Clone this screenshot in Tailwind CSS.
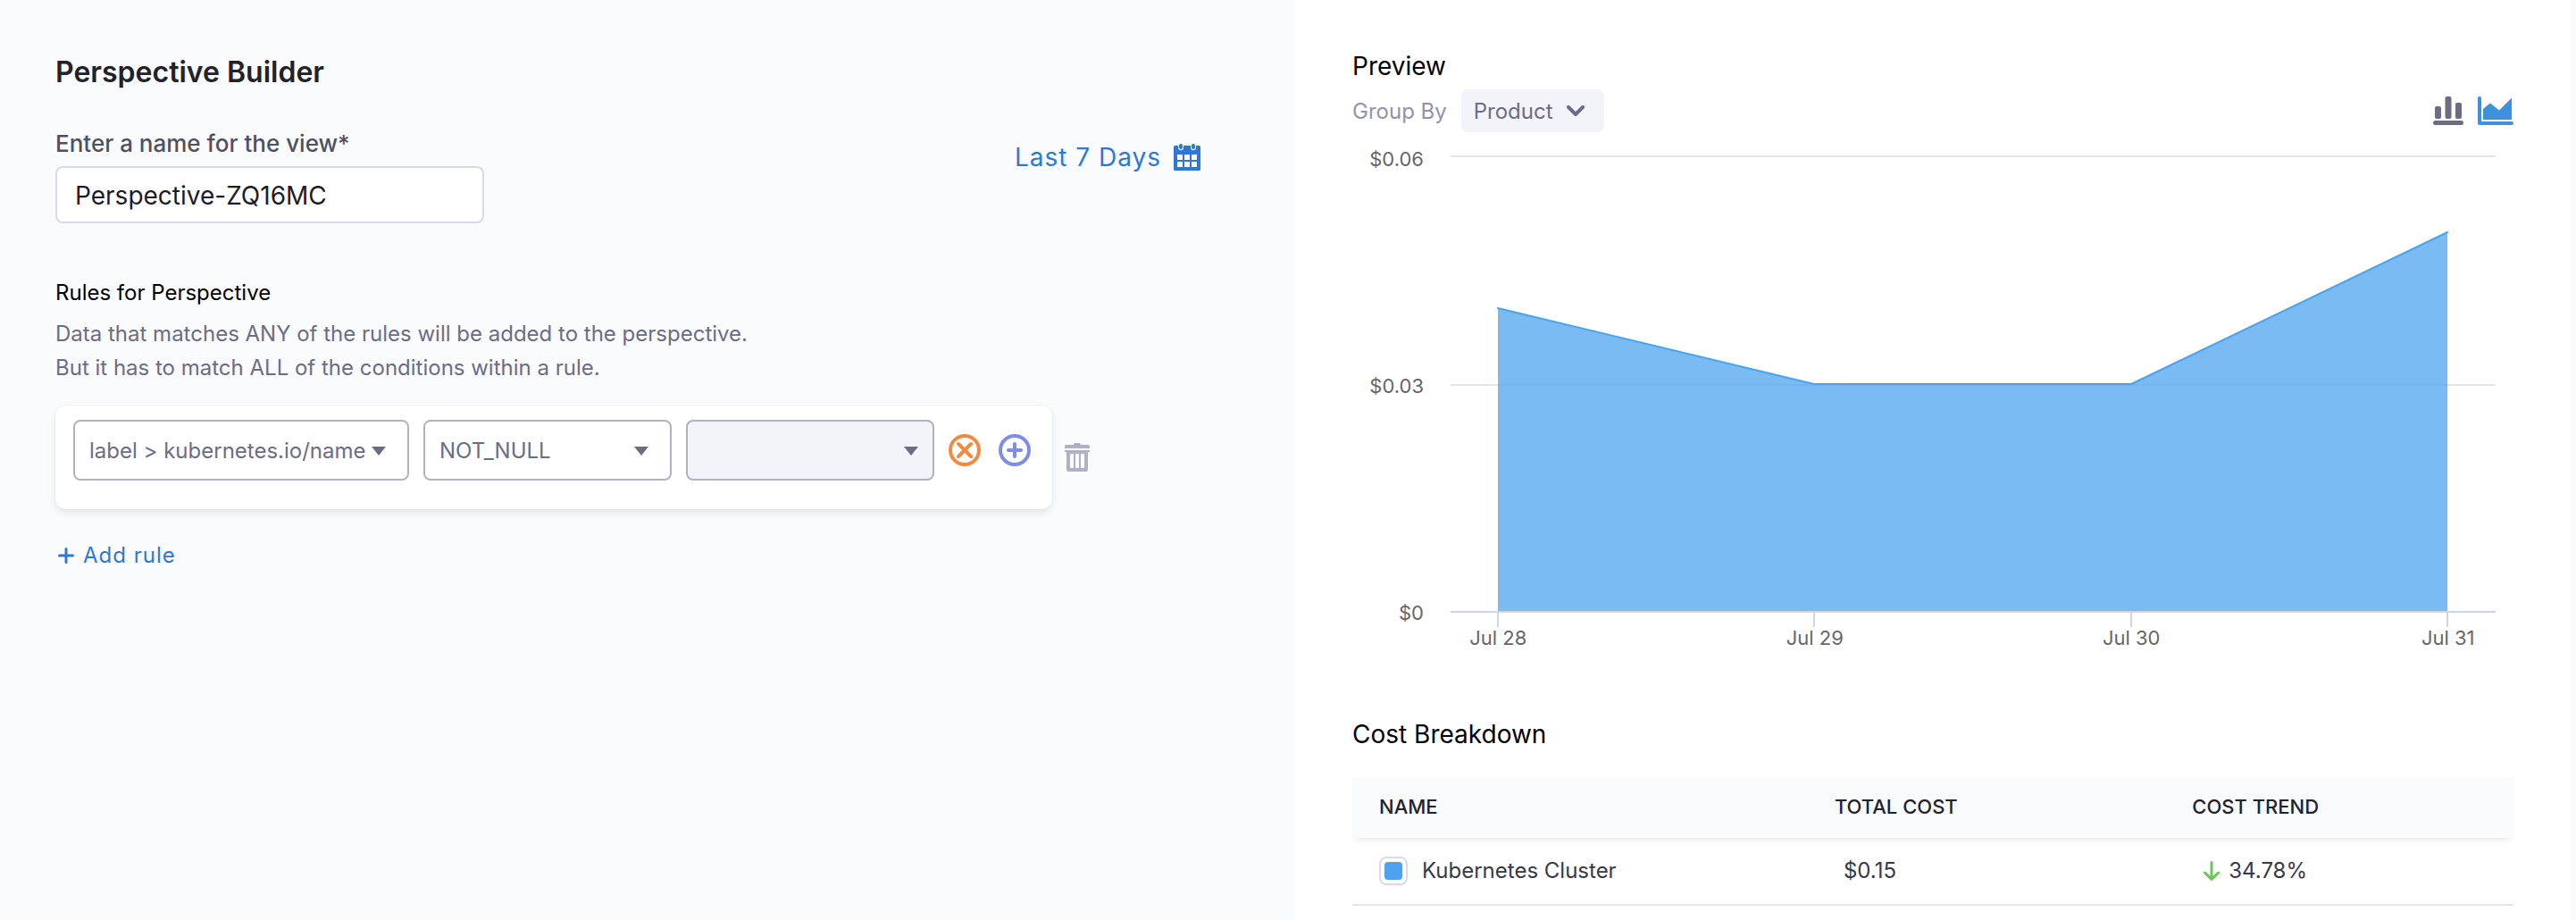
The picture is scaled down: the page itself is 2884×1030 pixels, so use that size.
<!DOCTYPE html>
<html lang="en">
<head>
<meta charset="utf-8">
<meta name="viewport" content="width=device-width, initial-scale=1">
<title>Perspective Builder</title>
<script src="https://cdn.jsdelivr.net/npm/@tailwindcss/browser@4"></script>
</head>
<body class="bg-[#fafbfd] font-['Inter',sans-serif] text-2xl text-[#6b6d85]">
<div class="grid min-h-screen grid-cols-[1450fr_1434fr]">

  <section class="pt-[61px] pl-[62px]">
    <h1 class="text-[32px] leading-10 font-semibold text-[#22222a]">Perspective Builder</h1>

    <div class="mt-[43px] flex items-start justify-between pr-[106px]">
      <div class="flex flex-col gap-2">
        <label for="view-name" class="text-[26px] leading-[34px] font-medium text-[#4f5162]">Enter a name for the view*</label>
        <input id="view-name" type="text" value="Perspective-ZQ16MC" class="h-16 w-120 rounded-lg border-2 border-[#d9dae6] bg-white px-5 pt-[2px] text-[28px] text-[#1c1c28] outline-none">
      </div>
      <button type="button" class="flex h-16 items-center gap-[14px] text-[28px] tracking-[1px] text-[#2f78d2]">
        <span class="pt-[2px]">Last 7 Days</span>
        <svg class="h-[30px] w-[30px]" viewBox="0 0 30 30" aria-hidden="true">
          <path fill="currentColor" fill-rule="evenodd" d="M1.500 2H5v2.200a3 3 0 0 0 6 0V2h8v2.200a3 3 0 0 0 6 0V2h3.500A1.500 1.500 0 0 1 30 3.500v25a1.500 1.500 0 0 1-1.500 1.500h-27A1.500 1.500 0 0 1 0 28.500v-25A1.500 1.500 0 0 1 1.500 2ZM4 12v6h6v-6Zm8 0v6h6v-6Zm8 0v6h6v-6ZM4 20v6h6v-6Zm8 0v6h6v-6Zm8 0v6h6v-6Z"/>
          <rect x="6" y="0" width="4" height="6" rx="2" fill="currentColor"/>
          <rect x="20" y="0" width="4" height="6" rx="2" fill="currentColor"/>
        </svg>
      </button>
    </div>

    <h2 class="mt-[59px] leading-[38px] text-black">Rules for Perspective</h2>
    <p class="mt-2 leading-[38px]">Data that matches ANY of the rules will be added to the perspective.<br>But it has to match ALL of the conditions within a rule.</p>

    <div class="mt-[23px] flex items-center gap-[14px]">
      <div class="flex items-center gap-4 rounded-xl bg-white pt-4 pr-6 pb-8 pl-5 shadow-[0_4px_8px_rgba(40,41,61,0.1),0_0_2px_rgba(40,41,61,0.06)]">
        <div class="relative">
          <select aria-label="Field" class="h-[68px] w-[376px] appearance-none rounded-lg border-2 border-[#b0b1c4] bg-white pt-[2px] pl-4 outline-none"><option>label &gt; kubernetes.io/name</option></select>
          <svg class="pointer-events-none absolute top-[30px] right-[26px] h-[10px] w-4" viewBox="0 0 16 10" aria-hidden="true"><path fill="currentColor" d="M0 0h16L8 10Z"/></svg>
        </div>
        <div class="relative">
          <select aria-label="Operator" class="h-[68px] w-[278px] appearance-none rounded-lg border-2 border-[#b0b1c4] bg-white pt-[2px] pl-4 outline-none"><option>NOT_NULL</option></select>
          <svg class="pointer-events-none absolute top-[30px] right-[26px] h-[10px] w-4" viewBox="0 0 16 10" aria-hidden="true"><path fill="currentColor" d="M0 0h16L8 10Z"/></svg>
        </div>
        <div class="relative">
          <select aria-label="Value" disabled class="h-[68px] w-[278px] appearance-none rounded-lg border-2 border-[#b0b1c4] bg-[#f3f3fa] pl-4 opacity-100"><option></option></select>
          <svg class="pointer-events-none absolute top-[30px] right-[18px] h-[10px] w-4" viewBox="0 0 16 10" aria-hidden="true"><path fill="currentColor" d="M0 0h16L8 10Z"/></svg>
        </div>
        <div class="flex gap-5">
          <button type="button" aria-label="Remove condition" class="text-[#f18a43]">
            <svg class="h-9 w-9" viewBox="0 0 36 36" fill="none" stroke="currentColor" stroke-width="4" aria-hidden="true"><circle cx="18" cy="18" r="16"/><path stroke-linecap="round" d="m11 11 14 14M25 11 11 25"/></svg>
          </button>
          <button type="button" aria-label="Add condition" class="text-[#7b8de6]">
            <svg class="h-9 w-9" viewBox="0 0 36 36" fill="none" stroke="currentColor" stroke-width="4" aria-hidden="true"><circle cx="18" cy="18" r="16"/><path stroke-linecap="round" d="M18 11v14M11 18h14"/></svg>
          </button>
        </div>
      </div>
      <button type="button" aria-label="Delete rule" class="text-[#b0b1c4]">
        <svg class="h-8 w-7" viewBox="0 0 28 32" fill="currentColor" aria-hidden="true">
          <path d="M10 2V1.500A1.500 1.500 0 0 1 11.500 0h5A1.500 1.500 0 0 1 18 1.500V2h8.500A1.500 1.500 0 0 1 28 3.500V6H0V3.500A1.500 1.500 0 0 1 1.500 2Z"/>
          <path fill-rule="evenodd" d="M0 8h28v2h-2v20a2 2 0 0 1-2 2H4a2 2 0 0 1-2-2V10H0Zm6 5v14a1 1 0 0 0 1 1h2a1 1 0 0 0 1-1V13a1 1 0 0 0-1-1H7a1 1 0 0 0-1 1Zm6 0v14a1 1 0 0 0 1 1h2a1 1 0 0 0 1-1V13a1 1 0 0 0-1-1h-2a1 1 0 0 0-1 1Zm6 0v14a1 1 0 0 0 1 1h2a1 1 0 0 0 1-1V13a1 1 0 0 0-1-1h-2a1 1 0 0 0-1 1Z"/>
        </svg>
      </button>
    </div>

    <button type="button" class="mt-[33px] flex items-center gap-[10px] pl-[3px] leading-[38px] tracking-[1px] text-[#2f78d2]">
      <svg class="h-[18px] w-[18px]" viewBox="0 0 18 18" fill="none" stroke="currentColor" stroke-width="3" stroke-linecap="round" aria-hidden="true"><path d="M9 1.500v15M1.500 9h15"/></svg>
      Add rule
    </button>
  </section>

  <section class="mr-[6px] bg-white pt-14 pr-16 pl-16 shadow-[0_0_2px_rgba(40,41,61,0.04)]">
    <h2 class="text-[28px] leading-9 text-black">Preview</h2>

    <div class="mt-2 flex items-center">
      <label for="group-by" class="pt-[2px] text-[#9293ab]">Group By</label>
      <div class="relative ml-4">
        <select id="group-by" class="block h-12 w-40 appearance-none rounded-lg bg-[#f3f3fa] pt-[2px] pl-[14px] outline-none"><option>Product</option></select>
        <svg class="pointer-events-none absolute top-[18px] right-[22px] h-3 w-5" viewBox="0 0 20 12" fill="none" stroke="currentColor" stroke-width="4" stroke-linecap="round" stroke-linejoin="round" aria-hidden="true"><path d="m2 2 8 8 8-8"/></svg>
      </div>
      <div class="ml-auto flex gap-4">
        <button type="button" aria-label="Bar chart">
          <svg class="h-8 w-[34px]" viewBox="0 0 34 32" fill="currentColor" aria-hidden="true"><rect x="2" y="11" width="7" height="14" rx="2"/><rect x="13.500" y="0" width="7" height="25" rx="2"/><rect x="25" y="7" width="7" height="18" rx="2"/><rect x="0" y="27" width="34" height="5" rx="2.500"/></svg>
        </button>
        <button type="button" aria-label="Area chart" class="text-[#3d92de]">
          <svg class="h-8 w-10" viewBox="0 0 40 32" fill="currentColor" aria-hidden="true"><path d="M2 0a2 2 0 0 1 2 2v26h34a2 2 0 0 1 0 4H2a2 2 0 0 1-2-2V2a2 2 0 0 1 2-2Z"/><path d="M6 26V14l6.500-5.500a2 2 0 0 1 2.800 0L24 15.500 38 1.500V26Z"/></svg>
        </button>
      </div>
    </div>

    <div class="mt-[18px] flex gap-[30px] pr-5 text-[22px] leading-6 text-[#666]">
      <div class="flex h-[532px] w-20 flex-col justify-between text-right">
        <span>$0.06</span><span>$0.03</span><span>$0</span>
      </div>
      <div class="min-w-0 flex-1 pt-2">
        <svg class="block h-[528px] w-full" viewBox="0 0 1170 528" preserveAspectRatio="none" fill="none" stroke-width="2" role="img" aria-label="Cost by day">
          <path stroke="#e6e6e6" d="M0 1h1170M0 257h1170"/>
          <path fill="#4ea4ef" fill-opacity="0.75" d="M53 171 407 256H762L1116 86V511H53Z"/>
          <path stroke="#4ba3f0" stroke-linejoin="round" stroke-linecap="round" d="M53 171 407 256H762L1116 86"/>
          <path stroke="#ccd6eb" d="M0 511h1170M53 512v16M407 512v16M762 512v16M1116 512v16"/>
        </svg>
        <div class="flex justify-between px-[4.55%] whitespace-nowrap">
          <span class="flex w-0 justify-center">Jul 28</span><span class="flex w-0 justify-center">Jul 29</span><span class="flex w-0 justify-center">Jul 30</span><span class="flex w-0 justify-center">Jul 31</span>
        </div>
      </div>
    </div>

    <h2 class="mt-[78px] text-[28px] leading-9 text-black">Cost Breakdown</h2>

    <table class="mt-[30px] w-full table-fixed border-separate border-spacing-0 text-left text-[#383946]">
      <thead class="text-[22px] text-[#22222a] shadow-[0_6px_6px_-4px_rgba(40,41,61,0.12)]">
        <tr class="h-[68px] bg-[#fafbfd]">
          <th scope="col" class="w-[39.3%] pl-[30px] font-medium">NAME</th>
          <th scope="col" class="w-[30.8%] pl-[29px] font-medium">TOTAL COST</th>
          <th scope="col" class="pl-[29px] font-medium">COST TREND</th>
        </tr>
      </thead>
      <tbody>
        <tr class="h-[76px]">
          <td class="border-b-2 border-[#e6e6ec] pl-[30px]">
            <label class="flex items-center gap-4">
              <input type="checkbox" checked class="grid h-8 w-8 appearance-none place-items-center rounded-lg border-2 border-[#d9dae6] bg-white before:h-5 before:w-5 before:rounded before:bg-[#4ba3f0] before:content-['']">
              Kubernetes Cluster
            </label>
          </td>
          <td class="border-b-2 border-[#e6e6ec] pl-[39px]">$0.15</td>
          <td class="border-b-2 border-[#e6e6ec] pl-[42px]">
            <div class="flex items-center gap-[10px]">
              <svg class="h-[22px] w-[18px]" viewBox="0 0 18 22" fill="none" stroke="#6bc558" stroke-width="3" stroke-linecap="round" stroke-linejoin="round" aria-hidden="true"><path d="M9 1.500v19M1.500 13 9 20.500 16.500 13"/></svg>
              34.78%
            </div>
          </td>
        </tr>
      </tbody>
    </table>
  </section>
</div>
</body>
</html>
